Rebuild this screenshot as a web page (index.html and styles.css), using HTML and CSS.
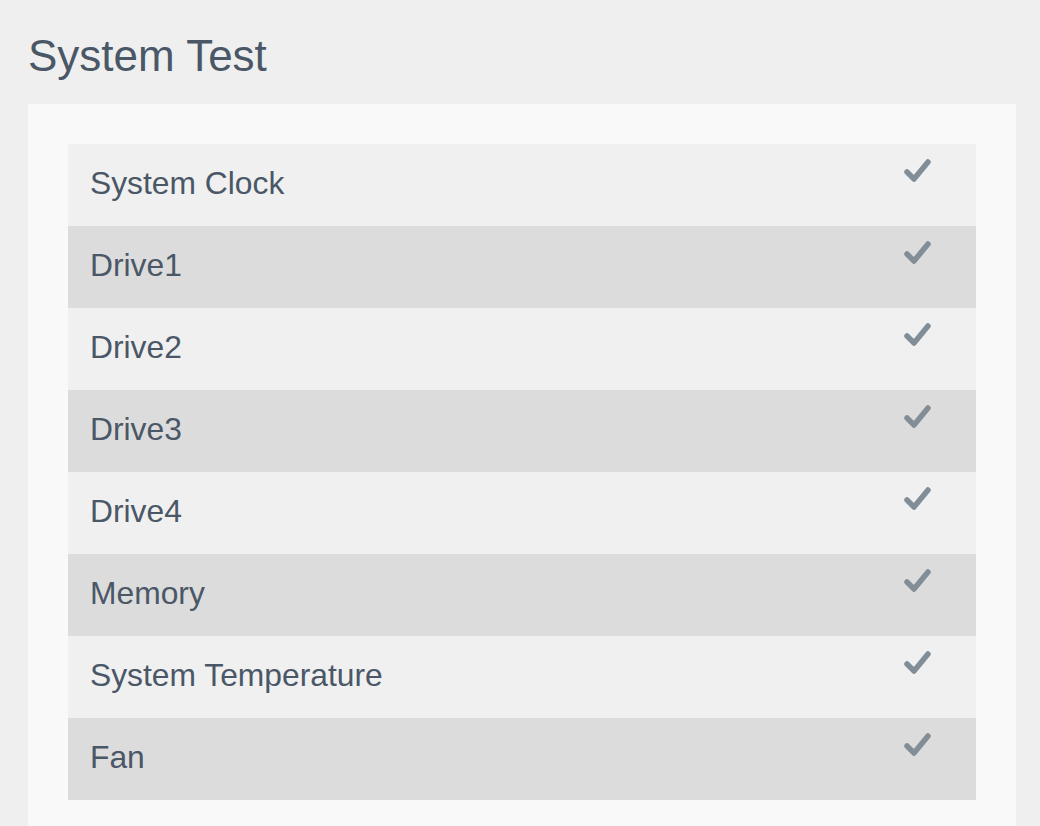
FILE: index.html
```html
<!DOCTYPE html>
<html lang="en">
<head>
<meta charset="utf-8">
<title>System Test</title>
<link rel="stylesheet" href="styles.css">
</head>
<body>
<main class="page">
  <h1 class="title">System Test</h1>
  <section class="panel">
    <ul class="tests">
      <li class="test"><span class="name">System Clock</span><svg class="check" viewBox="0 0 30 28" width="30" height="28"><polyline points="5,15 12,22 26,5"/></svg></li>
      <li class="test"><span class="name">Drive1</span><svg class="check" viewBox="0 0 30 28" width="30" height="28"><polyline points="5,15 12,22 26,5"/></svg></li>
      <li class="test"><span class="name">Drive2</span><svg class="check" viewBox="0 0 30 28" width="30" height="28"><polyline points="5,15 12,22 26,5"/></svg></li>
      <li class="test"><span class="name">Drive3</span><svg class="check" viewBox="0 0 30 28" width="30" height="28"><polyline points="5,15 12,22 26,5"/></svg></li>
      <li class="test"><span class="name">Drive4</span><svg class="check" viewBox="0 0 30 28" width="30" height="28"><polyline points="5,15 12,22 26,5"/></svg></li>
      <li class="test"><span class="name">Memory</span><svg class="check" viewBox="0 0 30 28" width="30" height="28"><polyline points="5,15 12,22 26,5"/></svg></li>
      <li class="test"><span class="name">System Temperature</span><svg class="check" viewBox="0 0 30 28" width="30" height="28"><polyline points="5,15 12,22 26,5"/></svg></li>
      <li class="test"><span class="name">Fan</span><svg class="check" viewBox="0 0 30 28" width="30" height="28"><polyline points="5,15 12,22 26,5"/></svg></li>
    </ul>
  </section>
</main>
</body>
</html>
```
FILE: styles.css
```css
html, body {
  margin: 0;
  padding: 0;
  background: #efefef;
}
body {
  font-family: "Liberation Sans", Arial, Helvetica, sans-serif;
  color: #4a5767;
  overflow: hidden;
}
.page {
  padding: 32px 24px 0 28px;
}
.title {
  margin: 0 0 24px 0;
  font-size: 44px;
  line-height: 48px;
  font-weight: normal;
  color: #4a5767;
}
.panel {
  background: #f9f9f9;
  padding: 40px;
}
.tests {
  list-style: none;
  margin: 0;
  padding: 0;
}
.test {
  display: flex;
  justify-content: space-between;
  align-items: flex-start;
  height: 82px;
  box-sizing: border-box;
  padding: 21px 44px 0 22px;
  background: #f0f0f0;
}
.test:nth-child(even) {
  background: #dcdcdc;
}
.name {
  font-size: 31.8px;
  line-height: 36px;
}
.check {
  display: block;
  margin-top: -8px;
  fill: none;
  stroke: #818e98;
  stroke-width: 5.5;
  stroke-linecap: round;
  stroke-linejoin: round;
}
```
